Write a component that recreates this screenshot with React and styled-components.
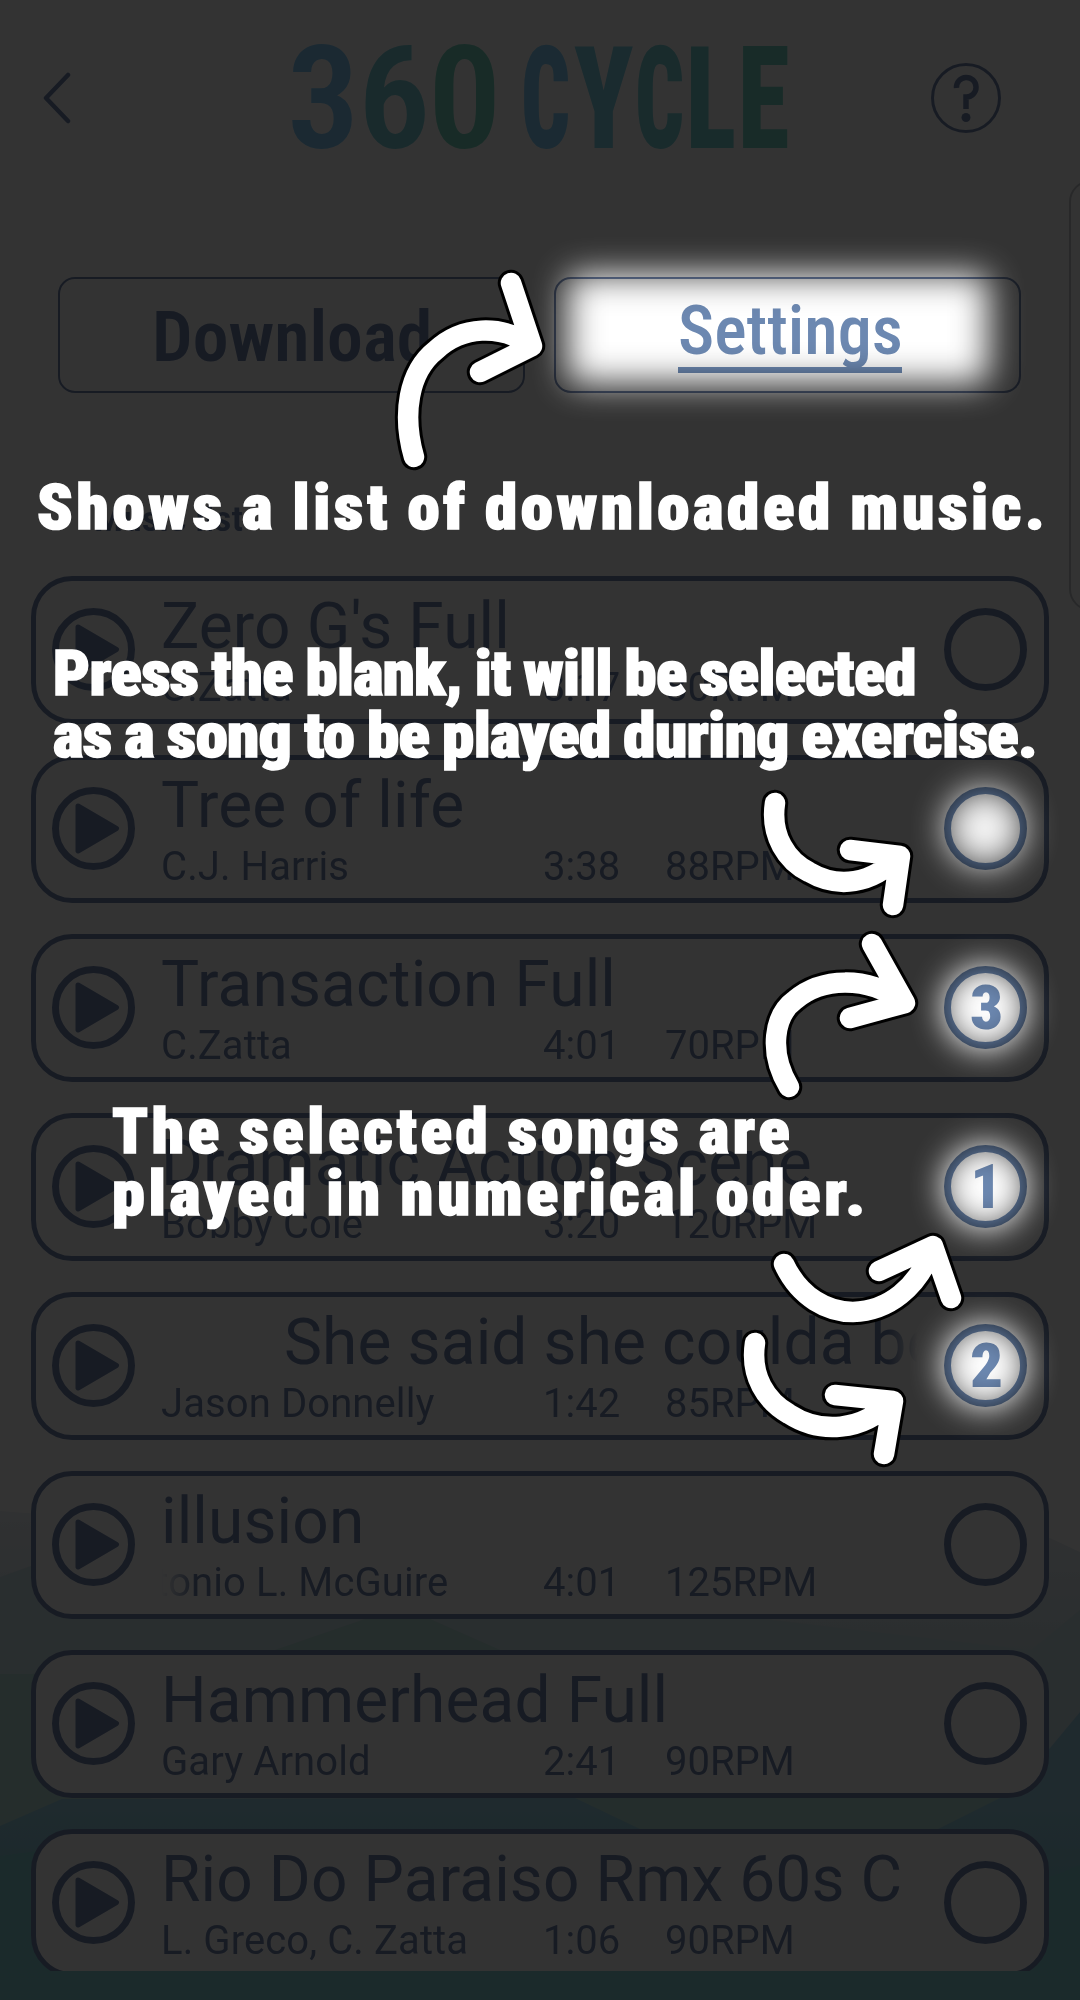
import React, { useLayoutEffect, useRef, useState } from "react";
import styled, { createGlobalStyle } from "styled-components";

const INK = "#7387af";
const BRIGHT = "#6c88b1";

const GlobalStyle = createGlobalStyle`
  body { margin: 0; background: #333; }
  * { box-sizing: border-box; }
`;

const Page = styled.div`
  position: relative;
  width: 1080px;
  height: 2000px;
  overflow: hidden;
  background: #fff;
  font-family: Roboto, "Liberation Sans", sans-serif;
  color: ${INK};
`;

const Backdrop = styled.svg`
  position: absolute;
  left: 0;
  bottom: 0;
`;

const Screen = styled.div`
  position: relative;
  display: flex;
  flex-direction: column;
  height: 1971px;
  overflow: hidden;

  > * {
    flex: none;
  }
`;

const Header = styled.header`
  display: flex;
  align-items: center;
  justify-content: space-between;
  height: 196px;
  padding: 0 79px 0 43px;
`;

const Wordmark = styled.h1`
  display: flex;
  margin: 4px 0 0 73px;
  height: 102px;
`;

const Letter = styled.span`
  margin-left: ${(p) => p.$gap}px;
  color: ${(p) => p.$color};
`;

const FitBox = styled.span`
  display: block;
  width: ${(p) => p.$width}px;
  line-height: ${(p) => p.$line}px;
  font-size: ${(p) => p.$size}px;
  font-weight: ${(p) => p.$weight || 400};
  font-stretch: 75%;
  letter-spacing: ${(p) => p.$spacing || 0}px;
  word-spacing: ${(p) => p.$words || 0}px;
  white-space: nowrap;
`;

const FitInner = styled.span`
  display: inline-block;
  transform-origin: 0 50%;
`;

function Fit({ children, ...rest }) {
  const ref = useRef(null);
  const [scale, setScale] = useState(1);
  useLayoutEffect(() => {
    const natural = ref.current.offsetWidth - (rest.$spacing || 0);
    setScale(rest.$width / natural);
  }, [rest.$width, rest.$spacing]);
  return (
    <FitBox {...rest}>
      <FitInner ref={ref} style={{ transform: `scaleX(${scale})` }}>
        {children}
      </FitInner>
    </FitBox>
  );
}

const Tabs = styled.nav`
  display: flex;
  gap: 29px;
  padding: 81px 58px 0;
`;

const Tab = styled.button`
  display: flex;
  flex-direction: column;
  align-items: center;
  width: 467px;
  height: 116px;
  padding: ${(p) => (p.$active ? "17px 0 0 5px" : "23px 0 0 1px")};
  border: 2px solid ${INK};
  border-radius: 17px;
  background: #fff;
  color: ${(p) => (p.$active ? BRIGHT : INK)};
  font-family: inherit;
  text-align: left;
`;

const Underline = styled.span`
  width: 224px;
  height: 6px;
  background: ${BRIGHT};
`;

const ListTitle = styled.h2`
  margin: 107px 0 0 94px;
  height: 76px;
`;

const List = styled.ul`
  display: flex;
  flex-direction: column;
  gap: 31px;
  margin: 0;
  padding: 0 31px;
  list-style: none;
`;

const Row = styled.li`
  display: flex;
  align-items: center;
  flex: none;
  height: 148px;
  padding: 0 17px 1px 16px;
  border: 5px solid ${INK};
  border-radius: 41px;
  background: #fff;
`;

const Song = styled.div`
  width: 758px;
  margin: 0 auto 0 26px;
  padding-top: 10px;
`;

const SongTitle = styled.div`
  height: 73px;
  padding-left: ${(p) => (p.$scrolled ? 123 : 0)}px;
  font-size: 64px;
  line-height: 64px;
  letter-spacing: 0.12px;
  white-space: nowrap;
  overflow: hidden;
  ${(p) =>
    p.$scrolled &&
    "mask-image: linear-gradient(to right, #000 728px, transparent 757px);"}
`;

const Meta = styled.div`
  display: grid;
  grid-template-columns: 382px 122px 1fr;
  font-size: 40px;
  line-height: 40px;
  height: 46px;
  white-space: nowrap;
`;

const Artist = styled.span`
  width: 355px;
  height: 50px;
  overflow: hidden;
  letter-spacing: 0.1px;
  text-indent: ${(p) => (p.$scrolled ? -54 : 0)}px;
  ${(p) =>
    p.$scrolled &&
    "mask-image: linear-gradient(to right, transparent 0, #000 34px);"}
`;

const Marker = styled.span`
  display: flex;
  justify-content: center;
  width: 83px;
  height: 83px;
  border: 7px solid ${(p) => (p.$lit ? BRIGHT : INK)};
  border-radius: 50%;
  color: ${BRIGHT};
  padding: 4px 0 0 1px;
`;

const SidePanel = styled.div`
  position: absolute;
  left: 1069px;
  top: 180px;
  width: 60px;
  height: 431px;
  border: 2px solid #c4c8cc;
  border-radius: 22px;
`;

const Dimmer = styled.div`
  position: absolute;
  inset: 0;
  background: #333;
  mix-blend-mode: multiply;
`;

const Glow = styled.div`
  position: absolute;
  left: ${(p) => p.$x}px;
  top: ${(p) => p.$y}px;
  width: ${(p) => p.$w}px;
  height: ${(p) => p.$h}px;
  border-radius: ${(p) => p.$radius}px;
  background: rgba(255, 255, 255, ${(p) => p.$alpha || 1});
  filter: blur(${(p) => p.$blur}px);
`;

const Caption = styled.p`
  position: absolute;
  left: ${(p) => p.$x}px;
  top: ${(p) => p.$y}px;
  margin: 0;
  color: #fff;
  -webkit-text-stroke: 1.6px #fff;
`;

const Arrows = styled.svg`
  position: absolute;
  inset: 0;
  fill: none;
  stroke-linecap: round;
  stroke-linejoin: round;
`;

const songs = [
  { title: "Zero G's Full", artist: "C.Zatta", time: "3:17", rpm: "80RPM" },
  { title: "Tree of life", artist: "C.J. Harris", time: "3:38", rpm: "88RPM", lit: true },
  { title: "Transaction Full", artist: "C.Zatta", time: "4:01", rpm: "70RPM", lit: true, order: "3" },
  { title: "Dramatic Action Scene", artist: "Bobby Cole", time: "3:20", rpm: "120RPM", lit: true, order: "1" },
  { title: "She said she coulda be", artist: "Jason Donnelly", time: "1:42", rpm: "85RPM", lit: true, order: "2", titleScrolled: true },
  { title: "illusion", artist: "Antonio L. McGuire", time: "4:01", rpm: "125RPM", artistScrolled: true },
  { title: "Hammerhead Full", artist: "Gary Arnold", time: "2:41", rpm: "90RPM" },
  { title: "Rio Do Paraiso Rmx 60s C", artist: "L. Greco, C. Zatta", time: "1:06", rpm: "90RPM" },
];

const arrows = [
  "M414 457C402 415 408 372 436 350C462 326 500 324 531 345M511 283L532 346L480 372",
  "M775 803C770 836 787 861 809 872C838 889 872 884 898 857M850 850L900 856L893 905",
  "M789 1087C768 1052 774 1015 795 1000C821 978 866 975 903 1002M872 944L905 1003L850 1018",
  "M784 1264C800 1298 828 1312 853 1312C888 1311 918 1288 933 1247M879 1271L933 1246L951 1298",
  "M755 1343C750 1376 766 1401 789 1414C820 1434 862 1432 892 1401M835 1395L893 1401L884 1454",
];

const digits = [
  ["3", 72, 0, "#83cdfa"],
  ["6", 72, -1, "#7cd2dc"],
  ["0", 73, -2, "#78d7c0"],
];

const cycle = [
  ["C", 49, 20, "#83d2ff"],
  ["Y", 59, 4, "#80d4e8"],
  ["C", 49, 2, "#7cd4dc"],
  ["L", 50, 2, "#78d4d4"],
  ["E", 51, 2, "#78d7c8"],
];

const PlayIcon = () => (
  <svg width="83" height="83" viewBox="0 0 83 83">
    <circle cx="41.5" cy="41.5" r="38" fill="none" stroke={INK} strokeWidth="7" />
    <path d="M26 19L64.500 41.500L26 64Z" fill={INK} stroke={INK} strokeWidth="5" strokeLinejoin="round" />
  </svg>
);

export default function App() {
  return (
    <>
      <GlobalStyle />
      <Page>
        <Backdrop width="1080" height="500" viewBox="0 1500 1080 500">
          <defs>
            <linearGradient id="far" x1="0" y1="1510" x2="0" y2="1650" gradientUnits="userSpaceOnUse">
              <stop offset="0" stopColor="#eef2f7" />
              <stop offset="1" stopColor="#d2e4e9" />
            </linearGradient>
            <linearGradient id="near" x1="0" y1="1790" x2="0" y2="1870" gradientUnits="userSpaceOnUse">
              <stop offset="0" stopColor="#9bd0e6" />
              <stop offset="1" stopColor="#8ccbd9" />
            </linearGradient>
          </defs>
          <path d="M0 1511L40 1514L540 1600L1050 1538L1080 1552V2000H0Z" fill="url(#far)" />
          <path d="M0 1577L31 1566L300 1590L600 1600L1031 1650L1080 1610V2000H0Z" fill="#cde2e8" />
          <path d="M0 1674H31L275 1650L365 1619H430L500 1650L620 1700L0 1830Z" fill="#b6ded9" />
          <path d="M0 1826L62 1799L560 1798L1000 1798L1050 1748L1080 1712V2000H0Z" fill="url(#near)" />
          <path d="M575 1798L640 1829H938L1000 1798L900 1740Z" fill="#b4dfd9" />
          <path d="M0 1856L60 1848L1050 1877L1080 1865V2000H0Z" fill="#84d0d6" />
        </Backdrop>

        <Screen>
          <Header>
            <svg width="28" height="52" viewBox="0 0 28 52">
              <path d="M25 3L3 26L25 49" fill="none" stroke={INK} strokeWidth="4.500" strokeLinecap="round" strokeLinejoin="round" />
            </svg>
            <Wordmark>
              {digits.map(([ch, w, gap, color]) => (
                <Letter key={ch} $gap={gap} $color={color}>
                  <Fit $width={w} $size={142} $line={102} $weight={600}>{ch}</Fit>
                </Letter>
              ))}
              {cycle.map(([ch, w, gap, color], i) => (
                <Letter key={i} $gap={gap} $color={color}>
                  <Fit $width={w} $size={142} $line={102} $weight={900}>{ch}</Fit>
                </Letter>
              ))}
            </Wordmark>
            <svg width="70" height="70" viewBox="0 0 70 70">
              <circle cx="35" cy="35" r="33.500" fill="none" stroke={INK} strokeWidth="3" />
              <path d="M25.500 25A9.800 9.800 0 1 1 35 34V46" fill="none" stroke={INK} strokeWidth="5.500" />
              <circle cx="35" cy="54.500" r="4.500" fill={INK} />
            </svg>
          </Header>

          <Tabs>
            <Tab>
              <Fit $width={280} $size={70} $line={70} $weight={650}>Download</Fit>
            </Tab>
            <Tab $active>
              <Fit $width={225} $size={68} $line={71} $weight={550}>Settings</Fit>
              <Underline />
            </Tab>
          </Tabs>

          <ListTitle>
            <Fit $width={149} $size={35} $line={40} $weight={600}>Music list</Fit>
          </ListTitle>

          <List>
            {songs.map((s) => (
              <Row key={s.title}>
                <PlayIcon />
                <Song>
                  <SongTitle $scrolled={s.titleScrolled}>{s.title}</SongTitle>
                  <Meta>
                    <Artist $scrolled={s.artistScrolled}>{s.artist}</Artist>
                    <span>{s.time}</span>
                    <span>{s.rpm}</span>
                  </Meta>
                </Song>
                <Marker $lit={s.lit}>
                  {s.order && (
                    <Fit $width={s.order === "1" ? 31 : 33} $size={61} $line={62} $weight={900}>{s.order}</Fit>
                  )}
                </Marker>
              </Row>
            ))}
          </List>
        </Screen>

        <SidePanel />

        <Dimmer>
          <Glow $x={568} $y={275} $w={420} $h={108} $radius={10} $blur={17} />
          <Glow $x={946} $y={789} $w={78} $h={78} $radius={39} $blur={17} $alpha={0.96} />
          {[1008, 1187, 1366].map((y) => (
            <Glow key={y} $x={943} $y={y - 42} $w={84} $h={84} $radius={42} $blur={16} />
          ))}
        </Dimmer>

        <Arrows width="1080" height="2000" viewBox="0 0 1080 2000">
          {arrows.map((d) => (
            <g key={d}>
              <path d={d} stroke="#000" strokeWidth="26.500" />
              <path d={d} stroke="#fff" strokeWidth="20.500" />
            </g>
          ))}
        </Arrows>

        <Caption $x={37} $y={477}>
          <Fit $width={1008} $size={63} $line={62} $weight={900} $spacing={3.5} $words={-2}>
            Shows a list of downloaded music.
          </Fit>
        </Caption>
        <Caption $x={53} $y={643}>
          <Fit $width={864} $size={63} $line={62} $weight={900} $spacing={-0.6} $words={-1.5}>
            Press the blank, it will be selected
          </Fit>
          <Fit $width={985} $size={63} $line={62} $weight={900} $spacing={-0.6} $words={-1.5}>
            as a song to be played during exercise.
          </Fit>
        </Caption>
        <Caption $x={112} $y={1101}>
          <Fit $width={678} $size={63} $line={62} $weight={900} $spacing={3.5} $words={-2}>
            The selected songs are
          </Fit>
          <Fit $width={753} $size={63} $line={62} $weight={900} $spacing={3.5} $words={-2}>
            played in numerical oder.
          </Fit>
        </Caption>
      </Page>
    </>
  );
}
